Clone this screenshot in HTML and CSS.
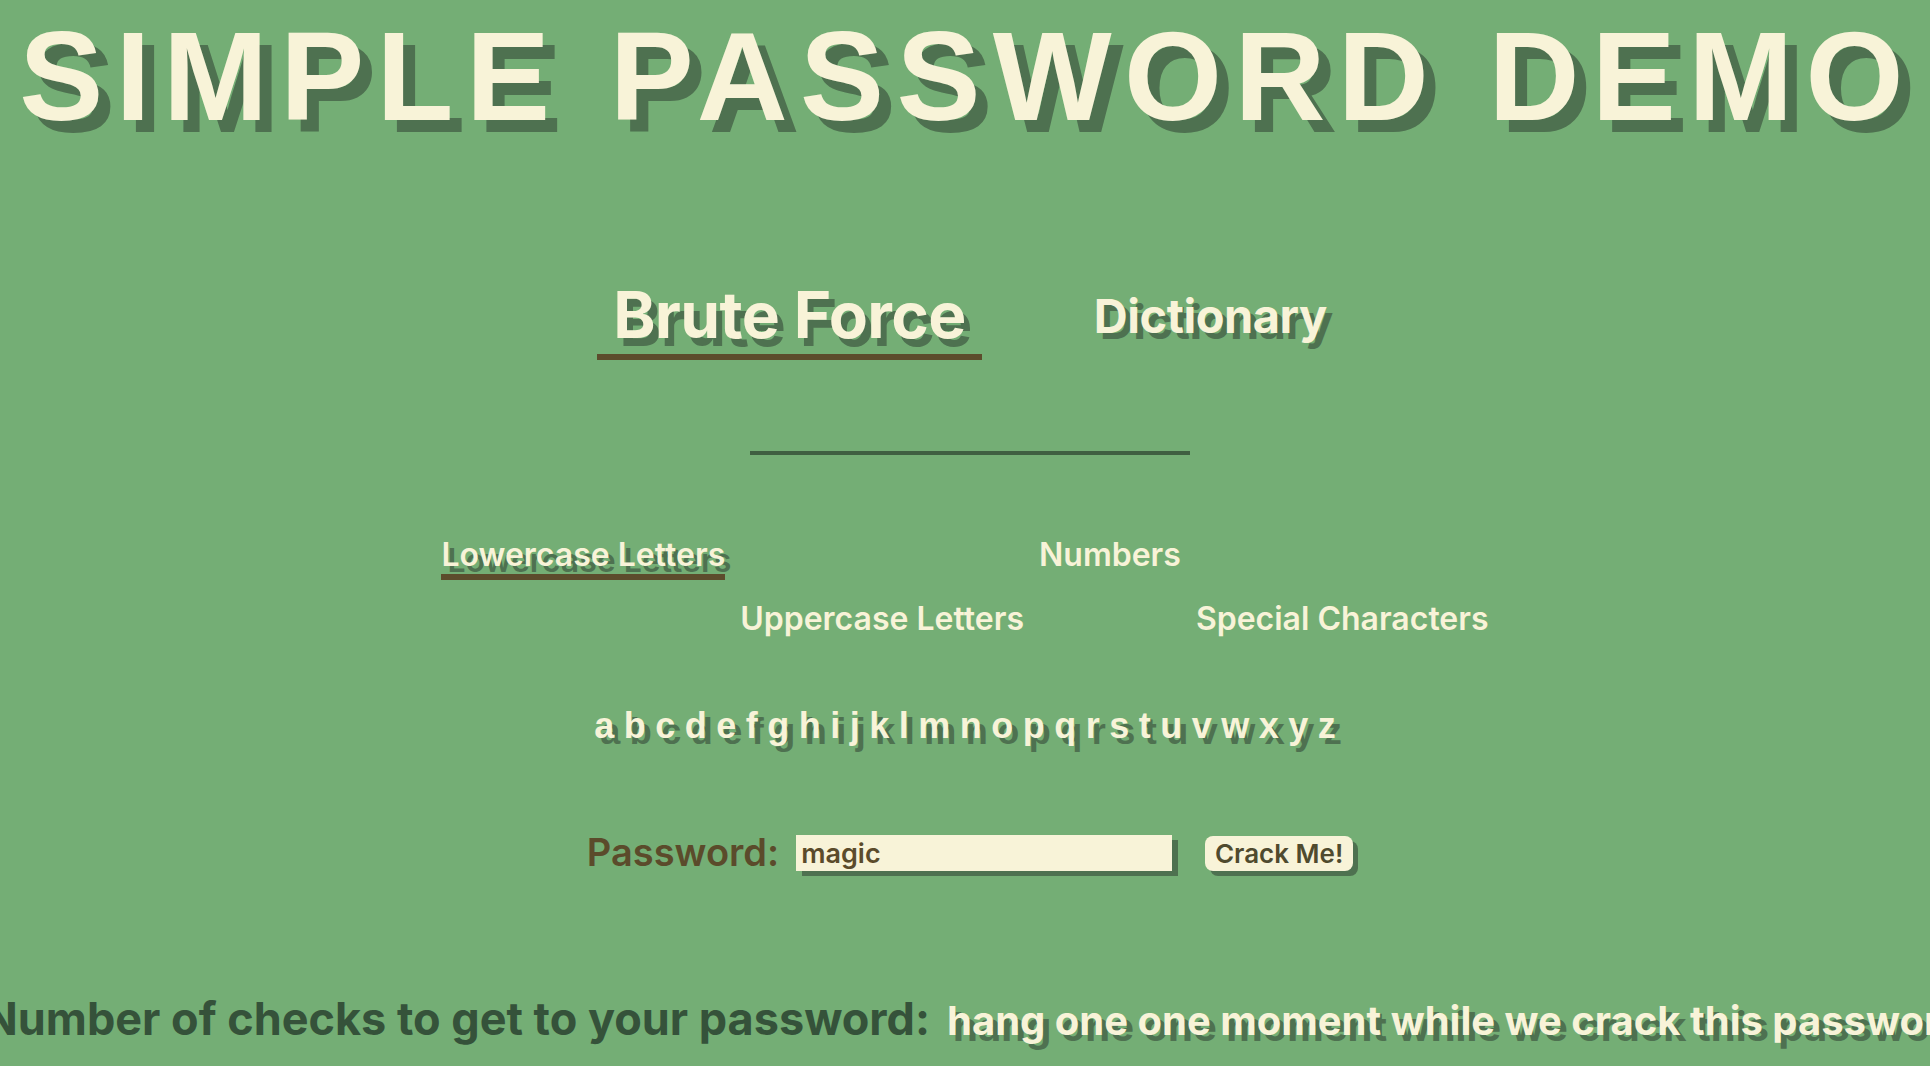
FILE: index.html
```html
<!DOCTYPE html>
<html lang="en">
<head>
<meta charset="utf-8">
<title>Simple Password Demo</title>
<link rel="stylesheet" href="styles.css">
</head>
<body>
  <h1 class="title">SIMPLE PASSWORD DEMO</h1>

  <nav class="tabs">
    <a class="tab tab-active">Brute Force</a>
    <a class="tab">Dictionary</a>
  </nav>

  <hr class="divider">

  <div class="charsets">
    <span class="charset charset-active">Lowercase Letters</span>
    <span class="charset charset-low">Uppercase Letters</span>
    <span class="charset">Numbers</span>
    <span class="charset charset-low">Special Characters</span>
  </div>

  <div class="alphabet">a b c d e f g h i j k l m n o p q r s t u v w x y z</div>

  <form class="crack">
    <label class="crack-label" for="pw">Password:</label>
    <input class="crack-input" id="pw" type="text" value="magic">
    <button class="crack-button" type="button">Crack Me!</button>
  </form>

  <div class="result">
    <span class="result-label">Number of checks to get to your password:</span>
    <span class="result-value">hang one one moment while we crack this password</span>
  </div>
</body>
</html>
```

FILE: styles.css
```css
html, body {
  margin: 0;
  padding: 0;
  overflow: hidden;
}

body {
  background: #74ae75;
  font-family: Inter, "Noto Sans", sans-serif;
  color: #f8f3d8;
  width: 1930px;
  height: 1066px;
}

.title {
  margin: 5px 0 0 0;
  padding-left: 5px;
  font-family: "Liberation Sans", Arial, sans-serif;
  font-weight: 700;
  font-size: 126px;
  line-height: 1.15;
  letter-spacing: 0.098em;
  text-align: center;
  color: #f8f3d8;
  text-shadow: 12px 12px 0 #4e7150;
  white-space: nowrap;
}

.tabs {
  display: flex;
  justify-content: center;
  align-items: center;
  gap: 96px;
  margin-top: 127px;
  padding-left: 10px;
}

.tab {
  font-weight: 700;
  font-size: 47px;
  line-height: 1.2;
  color: #f8f3d8;
  text-shadow: 6px 6px 0 #4e7150;
  padding: 0 16px;
  margin-bottom: 5px;
  letter-spacing: -0.01em;
}

.tab-active {
  font-size: 64px;
  margin-bottom: 0;
  border-bottom: 6px solid #5c4c2c;
  text-shadow: 6px 8px 0 #4e7150;
}

.divider {
  width: 440px;
  height: 4px;
  border: none;
  background: #3f5f41;
  margin: 91px auto 0;
  position: relative;
  left: 5px;
}

.charsets {
  display: flex;
  justify-content: center;
  align-items: flex-start;
  gap: 15px;
  margin-top: 81px;
}

.charset {
  font-weight: 600;
  font-size: 32px;
  line-height: 1.2;
  color: #f8f3d8;
}

.charset-active {
  text-shadow: 6px 6px 0 #4e7150;
  border-bottom: 6px solid #5c4c2c;
}

.charset-low {
  margin-top: 64px;
}

.alphabet {
  margin-top: 67px;
  text-align: center;
  font-family: "Liberation Sans", Arial, sans-serif;
  font-weight: 700;
  font-size: 36px;
  line-height: 1.15;
  color: #f8f3d8;
  text-shadow: 6px 6px 0 #4e7150;
  word-spacing: -0.5px;
}

.crack {
  display: flex;
  justify-content: center;
  align-items: center;
  margin: 84px 0 0 0;
  padding-left: 10px;
}

.crack-label {
  font-weight: 600;
  font-size: 38px;
  line-height: 1.2;
  color: #5b4b2b;
}

.crack-input {
  margin-left: 17px;
  width: 376px;
  height: 36px;
  box-sizing: border-box;
  border: none;
  outline: none;
  padding: 0 5px;
  background: #f8f3d8;
  box-shadow: 6px 5px 0 #4e7150;
  font-family: Inter, "Noto Sans", sans-serif;
  font-weight: 600;
  font-size: 27px;
  color: #5b4b2b;
}

.crack-button {
  margin-left: 33px;
  width: 148px;
  height: 35px;
  box-sizing: border-box;
  border: none;
  border-radius: 8px;
  padding: 0;
  background: #f8f3d8;
  box-shadow: 5px 5px 0 #4e7150;
  font-family: Inter, "Noto Sans", sans-serif;
  font-weight: 600;
  font-size: 26px;
  color: #4f4a2e;
}

.result {
  display: flex;
  justify-content: center;
  align-items: baseline;
  gap: 17px;
  margin-top: 116px;
  padding-left: 18px;
  white-space: nowrap;
}

.result-label {
  flex-shrink: 0;
  font-weight: 700;
  font-size: 45px;
  line-height: 1.2;
  color: #35523a;
}

.result-value {
  flex-shrink: 0;
  font-weight: 700;
  font-size: 40px;
  line-height: 1.2;
  color: #f8f3d8;
  text-shadow: 6px 6px 0 #4e7150;
}
```
